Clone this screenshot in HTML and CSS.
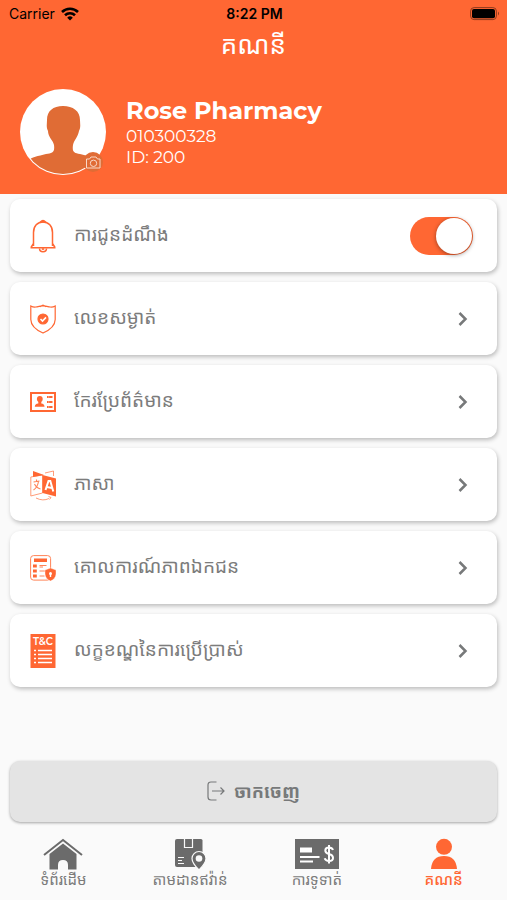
FILE: index.html
```html
<!DOCTYPE html>
<html lang="km">
    <head>
        <meta charset="utf-8">
        <meta name="viewport" content="width=device-width, initial-scale=1">
        <link rel="stylesheet" href="styles.css">
        <title>គណនី</title>
    </head>
    <body>
        <header class="header">
            <div class="status-bar">
                <span class="carrier">Carrier
                    <svg width="18" height="14" viewBox="0 0 18 14" fill="none" stroke="#000" stroke-width="2.6">
                        <path d="M1 5a11.5 11.5 0 0 1 16 0M4 8.2a7.2 7.2 0 0 1 10 0"/>
                        <path d="M9 13.6L6.2 10.7a4 4 0 0 1 5.6 0z" fill="#000" stroke="none"/>
                    </svg>
                </span>
                <span class="time">8:22 PM</span>
                <svg class="battery" width="30" height="14" viewBox="0 0 30 14">
                    <rect x=".6" y=".6" width="25.8" height="12" rx="3.5" fill="none" stroke="#8d3a1e"/>
                    <rect x="2" y="2" width="23" height="9.2" rx="2"/>
                    <path d="M28 4.5q2 2 0 4z" fill="#8d3a1e"/>
                </svg>
            </div>
            <h1>គណនី</h1>
            <div class="profile">
                <button class="avatar" type="button" aria-label="Photo">
                    <svg width="88" height="88" viewBox="0 0 88 88">
                        <clipPath id="face"><circle cx="44" cy="44" r="42"/></clipPath>
                        <circle cx="44" cy="44" r="43" fill="#fff"/>
                        <path clip-path="url(#face)" fill="#e06c35" d="M44 18c-10 0-16 5-16 14 0 4-1 7 1 11 0 6 5 9 6 14 1 8-2 8-8 9-8 2-14 3-19 7v18h74V73c-5-4-13-5-21-7-6-1-8-2-7-9 1-5 5-8 6-14 2-4 1-7 1-11 0-9-7-14-17-14z"/>
                        <circle cx="74" cy="74" r="10" fill="#e06c35"/>
                        <g fill="none" stroke="#fbd9c8">
                            <path d="M67.5 71h3l1.500-2h5l1.500 2h2.500v9h-13.500z"/>
                            <circle cx="74.500" cy="75.300" r="3.200"/>
                        </g>
                    </svg>
                </button>
                <div class="profile-text">
                    <h2>Rose Pharmacy</h2>
                    <p>010300328</p>
                    <p>ID: 200</p>
                </div>
            </div>
        </header>

        <main class="settings">
            <div class="card">
                <svg class="icon" viewBox="0 0 26 34" fill="none" stroke="#ff6733" stroke-width="1.500">
                    <path d="M3.500 27V13.500C3.500 7 7.500 3 13 3s9.500 4 9.500 10.500V27M1 28.500l2.500-4M25 28.500l-2.500-4M.5 28.800h25"/>
                    <path d="M10.500 3q2.500-3 5 0z" fill="#ff6733"/>
                    <path d="M9.500 29.500q0 3.200 3.500 3.200t3.500-3.200M12 29.500q1 1.500 2 0"/>
                </svg>
                <label class="card-label" for="notify">ការជូនដំណឹង</label>
                <input class="switch" type="checkbox" role="switch" id="notify" checked>
            </div>
            <a class="card" href="#">
                <svg class="icon" viewBox="0 0 26 34" fill="none" stroke="#ff6733" stroke-width="1.200">
                    <path d="M.8 4q3 1.800 6.200.8 3.500-1 6-1 2.500 0 6 1 3.200 1 6.200-.8v13.500C25 24 20 28 13 31 6 28 1 24 .8 17.500zM10 4.600l3-1.500 3 1.500"/>
                    <circle cx="13" cy="17" r="5" fill="#ff6733"/>
                    <path d="M10.500 17l2 2 3.500-3.600" stroke="#fff" stroke-width="1.600"/>
                </svg>
                <span class="card-label">លេខសម្ងាត់</span>
                <svg class="chevron" viewBox="0 0 10 16"><path d="M1.500 2l6 6-6 6"/></svg>
            </a>
            <a class="card" href="#">
                <svg class="icon" viewBox="0 0 26 34" fill="#ff6733">
                    <rect x="1" y="8" width="24" height="18" fill="none" stroke="#ff6733" stroke-width="2"/>
                    <circle cx="9.800" cy="14" r="2.900"/>
                    <path d="M8.300 15h3v3.500q3.200.2 3.200 3.300h-9.700q0-3 3.500-3.300z"/>
                    <path d="M17 12h5.500M17 17h5.500M17 22h5.500" stroke="#ff6733" stroke-width="2" stroke-dasharray="1.700 .4 4"/>
                </svg>
                <span class="card-label">កែរប្រែព័ត៌មាន</span>
                <svg class="chevron" viewBox="0 0 10 16"><path d="M1.500 2l6 6-6 6"/></svg>
            </a>
            <a class="card" href="#">
                <svg class="icon" viewBox="0 0 26 34" fill="none" stroke="#ff8357" stroke-width=".8">
                    <path d="M.8 9l11.700-2v18L.8 28zM15 5l8.500-2v5"/>
                    <path d="M3 3l11 4-11 2z" fill="#ff6733" stroke="none"/>
                    <path d="M12.500 7L26 10.500v18L12.500 25z" fill="#ff6733" stroke="none"/>
                    <path d="M3.500 14l6-1M6.500 11.500v2M8.500 13.500q-1 6-5 8.500M4.500 16q2 4 6 5" stroke-width="1.100"/>
                    <path d="M15.500 22l3-9h1.800l3 10.500M16.700 19l5.300 1" stroke="#fff" stroke-width="2"/>
                    <path d="M6 30q7 3.500 13 .5M18.500 28.500l2.500 1-1.500 2"/>
                </svg>
                <span class="card-label">ភាសា</span>
                <svg class="chevron" viewBox="0 0 10 16"><path d="M1.500 2l6 6-6 6"/></svg>
            </a>
            <a class="card" href="#">
                <svg class="icon" viewBox="0 0 26 34" fill="#ff6733">
                    <rect x=".6" y="4.600" width="20" height="24.500" rx="3" fill="none" stroke="#ff8357"/>
                    <rect x="4" y="7.500" width="13" height="3.500"/>
                    <path d="M3 13.500h3.800v3H3zM3 18.500h3.800v3H3zM3 23.500h3.800v3H3z"/>
                    <path d="M9.500 14.500h7M9.500 20h5.500M9.500 25h5M9.500 16h3.500" stroke="#ff8357"/>
                    <path d="M20.500 17l5.500 2v4q-.3 5-5.500 7-5.200-2-5.500-7v-4z" stroke="#fff" stroke-width=".4"/>
                    <circle cx="20.500" cy="22.500" r="1.500" fill="#fff"/>
                    <rect x="19.800" y="23" width="1.400" height="3" fill="#fff"/>
                </svg>
                <span class="card-label">គោលការណ៍ភាពឯកជន</span>
                <svg class="chevron" viewBox="0 0 10 16"><path d="M1.500 2l6 6-6 6"/></svg>
            </a>
            <a class="card" href="#">
                <svg class="icon" viewBox="0 0 26 34">
                    <path d="M.5 0h25v34H.5z" fill="#ff6733"/>
                    <text class="icon-text" x="13" y="11" text-anchor="middle">T&amp;C</text>
                    <path d="M8 16.500h14M8 20.500h14M8 24.500h14M8 28.500h14" stroke="#fff" stroke-width="1.600"/>
                    <path d="M4 16.500h2M4 20.500h2M4 24.500h2M4 28.500h2" stroke="#fff" stroke-width="1.600"/>
                </svg>
                <span class="card-label">លក្ខខណ្ឌនៃការប្រើប្រាស់</span>
                <svg class="chevron" viewBox="0 0 10 16"><path d="M1.500 2l6 6-6 6"/></svg>
            </a>
        </main>

        <button class="logout" type="button">
            <svg width="18" height="20" viewBox="0 0 18 20" fill="none" stroke="#77797a" stroke-width="1.200">
                <path d="M9.500 1H4Q1 1 1 4v12q0 3 3 3h5.500M5 10h12M13.500 6.500L17 10l-3.500 3.500"/>
            </svg>
            ចាកចេញ
        </button>

        <nav class="tabs">
            <a class="tab" href="#">
                <svg width="40" height="32" viewBox="0 0 40 32" fill="#6b6b6b">
                    <path d="M1 17L20 2l19 15" fill="none" stroke="#6b6b6b" stroke-width="2"/>
                    <path d="M20 5.500L33.500 16v15.500H25V27q0-5-5-5t-5 5v4.500H6.500V16z"/>
                </svg>
                ទំព័រដើម
            </a>
            <a class="tab" href="#">
                <svg width="32" height="32" viewBox="0 0 32 32" fill="#6b6b6b">
                    <path d="M3 1h24q1.500 0 1.500 1.500V29H3q-2 0-2-2V3q0-2 2-2z"/>
                    <path d="M10.500 1v8.500h8V1M4 19.500h6M4 22.500h4M4 25.500h6" fill="none" stroke="#fafafa" stroke-width="1.200"/>
                    <path d="M25 32q-7-7-7-11.500a7 7 0 0 1 14 0Q32 25 25 32z" stroke="#fafafa" stroke-width="1.200"/>
                    <circle cx="25" cy="20.500" r="3.300" fill="#fafafa"/>
                </svg>
                តាមដានឥវ៉ាន់
            </a>
            <a class="tab" href="#">
                <svg width="44" height="32" viewBox="0 0 44 32">
                    <path d="M0 1h44v30H0z" fill="#6b6b6b"/>
                    <path d="M5 9.500h12v5H5z" fill="#fff"/>
                    <path d="M5 19h19.500M5 23.500h13" stroke="#fff" stroke-width="1.800"/>
                    <path d="M38 12q-1-2.500-4-2.500-3.700 0-3.700 3 0 2.500 3.700 3.500 4 1 4 4 0 3-4 3-3.400 0-4.300-2.800M34 7v18.500" fill="none" stroke="#fff" stroke-width="2"/>
                </svg>
                ការទូទាត់
            </a>
            <a class="tab active" href="#" aria-current="page">
                <svg width="28" height="32" viewBox="0 0 28 32" fill="#ff6733">
                    <circle cx="14" cy="8.800" r="8"/>
                    <path d="M1 31q1-13 13-13t13 13z"/>
                </svg>
                គណនី
            </a>
        </nav>
    </body>
</html>
```

FILE: styles.css
```css
* {
    box-sizing: border-box;
}

body {
    background: #fafafa;
    color: #7c7c7c;
    display: flex;
    flex-direction: column;
    font-family: "Noto Sans Khmer", "Khmer OS", "Noto Sans", sans-serif;
    margin: 0;
    min-height: 100vh;
}

h1,
h2,
p {
    font-weight: 400;
    margin: 0;
}

a {
    color: inherit;
    text-decoration: none;
}

svg {
    flex: none;
}

.header {
    background: #ff6733;
    color: #fff;
    height: 194px;
}

.header h1 {
    font-size: 26px;
    line-height: 34px;
    text-align: center;
}

.status-bar {
    align-items: center;
    color: #000;
    display: grid;
    font-family: Inter, sans-serif;
    font-size: 14px;
    grid-template-columns: 1fr auto 1fr;
    height: 27px;
    padding: 0 7px 0 9px;
}

.carrier {
    align-items: center;
    display: flex;
    gap: 6px;
}

.time {
    font-weight: 600;
}

.battery {
    justify-self: end;
}

.profile {
    align-items: center;
    display: flex;
    font-family: Montserrat, Inter, sans-serif;
    gap: 19px;
    padding: 27px 19px 0;
}

.avatar {
    background: none;
    border: 0;
    display: flex;
    padding: 0;
}

.profile h2 {
    font-size: 24px;
    font-weight: 700;
    line-height: 30px;
}

.profile p {
    font-size: 17px;
    font-weight: 400;
    line-height: 21px;
}

.settings {
    display: grid;
    gap: 10px;
    padding: 5px 10px;
}

.card {
    align-items: center;
    background: #fff;
    border-radius: 10px;
    box-shadow: 1px 2px 4px rgba(0, 0, 0, .25);
    display: flex;
    height: 73px;
    padding: 0 24px 0 20px;
}

.icon {
    height: 34px;
    width: 26px;
}

.icon-text {
    fill: #fff;
    font-family: Montserrat, Inter, sans-serif;
    font-size: 10px;
    font-weight: 600;
}

.card-label {
    flex: 1;
    font-size: 19px;
    line-height: 30px;
    margin-left: 18px;
    padding-bottom: 4px;
}

.chevron {
    fill: none;
    height: 16px;
    margin-right: 5px;
    stroke: #77797a;
    stroke-width: 2.5;
    width: 10px;
}

.switch {
    appearance: none;
    background: #ccc;
    border-radius: 19px;
    display: flex;
    height: 38px;
    margin: 0;
    padding: 1px;
    width: 63px;
}

.switch::before {
    background: #fff;
    border-radius: 50%;
    box-shadow: 0 1px 4px rgba(0, 0, 0, .4);
    content: "";
    height: 36px;
    width: 36px;
}

.switch:checked {
    background: #ff6733;
    justify-content: flex-end;
}

.logout {
    align-items: center;
    background: #e4e4e4;
    border: 0;
    border-radius: 10px;
    box-shadow: 0 1px 3px rgba(0, 0, 0, .35);
    color: #77797a;
    display: flex;
    font-family: inherit;
    font-size: 18px;
    font-weight: 700;
    gap: 9px;
    height: 61px;
    justify-content: center;
    margin: auto 10px 7px;
    padding: 0 0 2px;
}

.tabs {
    display: grid;
    grid-template-columns: repeat(4, 1fr);
    height: 71px;
    padding: 9px 0 0;
}

.tab {
    align-items: center;
    display: flex;
    flex-direction: column;
    font-size: 15px;
    line-height: 18px;
    white-space: nowrap;
}

.active {
    color: #ff6733;
    font-weight: 500;
}
```
